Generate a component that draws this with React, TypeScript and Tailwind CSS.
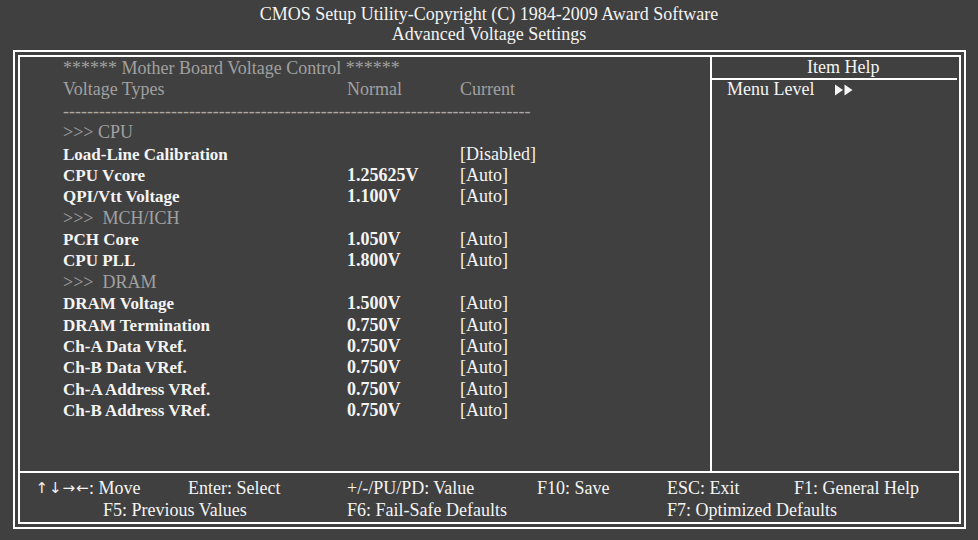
import React from "react";

type Row =
  | { kind: "section"; text: string }
  | { kind: "item"; label: string; normal: string; current: string };

const rows: Row[] = [
  { kind: "section", text: ">>> CPU" },
  { kind: "item", label: "Load-Line Calibration", normal: "", current: "[Disabled]" },
  { kind: "item", label: "CPU Vcore", normal: "1.25625V", current: "[Auto]" },
  { kind: "item", label: "QPI/Vtt Voltage", normal: "1.100V", current: "[Auto]" },
  { kind: "section", text: ">>>\u00a0\u00a0MCH/ICH" },
  { kind: "item", label: "PCH Core", normal: "1.050V", current: "[Auto]" },
  { kind: "item", label: "CPU PLL", normal: "1.800V", current: "[Auto]" },
  { kind: "section", text: ">>>\u00a0\u00a0DRAM" },
  { kind: "item", label: "DRAM Voltage", normal: "1.500V", current: "[Auto]" },
  { kind: "item", label: "DRAM Termination", normal: "0.750V", current: "[Auto]" },
  { kind: "item", label: "Ch-A Data VRef.", normal: "0.750V", current: "[Auto]" },
  { kind: "item", label: "Ch-B Data VRef.", normal: "0.750V", current: "[Auto]" },
  { kind: "item", label: "Ch-A Address VRef.", normal: "0.750V", current: "[Auto]" },
  { kind: "item", label: "Ch-B Address VRef.", normal: "0.750V", current: "[Auto]" },
];

const MenuArrows = () => (
  <svg width="18" height="12" viewBox="0 0 18 12" className="ml-[21px]">
    <polygon points="0,0.5 8,6 0,11.5" fill="#f4f4f4" />
    <polygon points="9.5,0.5 17.5,6 9.5,11.5" fill="#f4f4f4" />
  </svg>
);

const App = () => {
  return (
    <div className="w-[978px] h-[540px] bg-[#404040] font-['Liberation_Serif',serif] text-[#f4f4f4] flex flex-col overflow-hidden">
      {/* title */}
      <div className="h-[50px] pt-[4px] text-center text-[18px] leading-[20px]">
        <p>CMOS Setup Utility-Copyright (C) 1984-2009 Award Software</p>
        <p>Advanced Voltage Settings</p>
      </div>

      <div className="ml-[13px] w-[953px] h-[479px] border-2 border-white p-[3px]">
        <div className="h-full border-2 border-white flex flex-col">
          <div className="h-[414px] grid grid-cols-[692px_1fr]">
            {/* settings list */}
            <div className="border-r-2 border-white pt-[1px] pl-[43px]">
              <div className="h-[21.375px] leading-[21.375px] text-[18px] text-[#a0a0a0] whitespace-pre">
                ****** Mother Board Voltage Control ******
              </div>
              <div className="grid grid-cols-[284px_113px_1fr] h-[21.375px] leading-[21.375px] text-[18px] text-[#a0a0a0]">
                <span>Voltage Types</span>
                <span>Normal</span>
                <span>Current</span>
              </div>
              <div className="h-[21.375px] leading-[21.375px] text-[18px] text-[#a8a8a8] whitespace-nowrap">
                {"-".repeat(78)}
              </div>
              {rows.map((r, i) =>
                r.kind === "section" ? (
                  <div
                    key={i}
                    className="h-[21.375px] leading-[21.375px] text-[18px] text-[#a0a0a0] whitespace-pre"
                  >
                    {r.text}
                  </div>
                ) : (
                  <div
                    key={i}
                    className="grid grid-cols-[284px_113px_1fr] h-[21.375px] leading-[21.375px] items-center"
                  >
                    <span className="text-[17px] font-bold">{r.label}</span>
                    <span className="text-[18px] font-bold">{r.normal}</span>
                    <span className="text-[18px]">{r.current}</span>
                  </div>
                )
              )}
            </div>

            {/* help panel */}
            <div className="flex flex-col text-[18px]">
              <div className="h-[21px] leading-[21px] pl-[95px]">Item Help</div>
              <div className="h-[2px] bg-white mr-[2px]" />
              <div className="flex items-center h-[19px] leading-[19px] pl-[15px]">
                <span>Menu Level</span>
                <MenuArrows />
              </div>
            </div>
          </div>

          {/* key legend */}
          <div className="border-t-2 border-white flex-1 pt-[4px] text-[18px] leading-[22px]">
            <div className="flex pl-[15px] whitespace-nowrap">
              <span className="w-[153px] flex">
                <span className="inline-flex w-[54px] font-['DejaVu_Sans',sans-serif] text-[15px]">
                  <span className="w-[13.5px] text-center">↑</span>
                  <span className="w-[13.5px] text-center">↓</span>
                  <span className="w-[13.5px] text-center">→</span>
                  <span className="w-[13.5px] text-center">←</span>
                </span>
                <span>: Move</span>
              </span>
              <span className="w-[159px]">Enter: Select</span>
              <span className="w-[190px]">+/-/PU/PD: Value</span>
              <span className="w-[130px]">F10: Save</span>
              <span className="w-[127px]">ESC: Exit</span>
              <span>F1: General Help</span>
            </div>
            <div className="flex pl-[83px] whitespace-nowrap">
              <span className="w-[244px]">F5: Previous Values</span>
              <span className="w-[320px]">F6: Fail-Safe Defaults</span>
              <span>F7: Optimized Defaults</span>
            </div>
          </div>
        </div>
      </div>
    </div>
  );
};

export default App;
